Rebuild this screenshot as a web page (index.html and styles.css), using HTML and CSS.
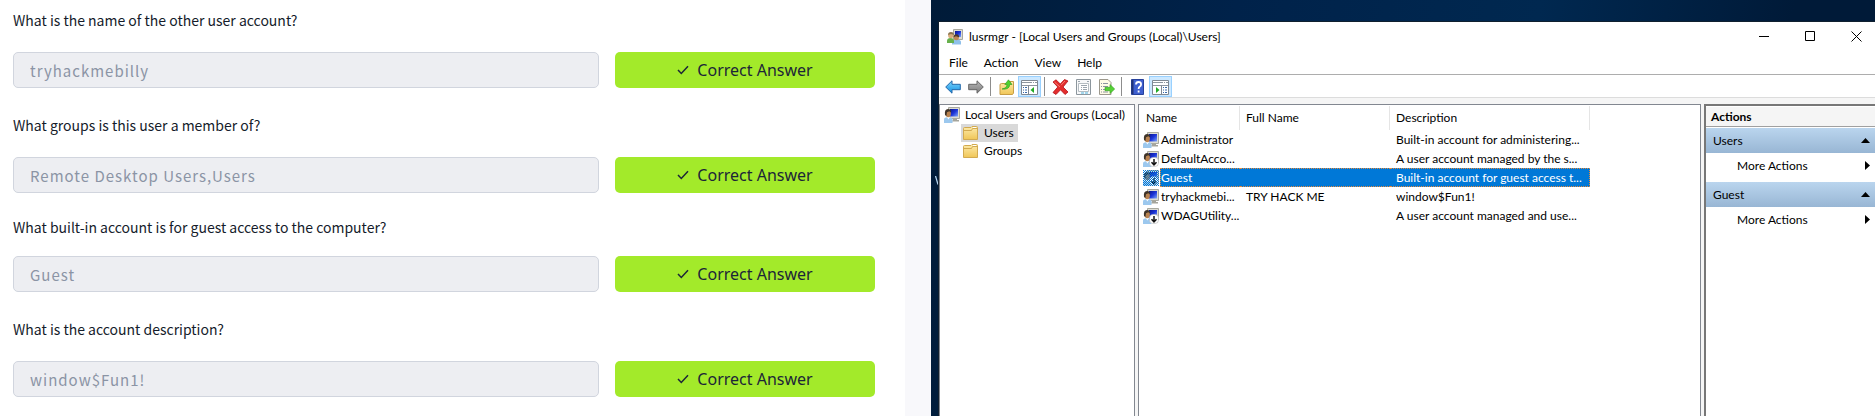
FILE: index.html
```
<!DOCTYPE html>
<html lang="en">
<head>
<meta charset="utf-8">
<title>Local users and groups</title>
<link rel="stylesheet" href="styles.css">
</head>
<body>
<svg class="sprite" aria-hidden="true">
  <defs>
    <linearGradient id="screen" x1="0" y1="0" x2="1" y2="1"><stop offset="0" stop-color="#0a1490"/><stop offset=".5" stop-color="#1c35d8"/><stop offset="1" stop-color="#7fa6f8"/></linearGradient>
    <linearGradient id="folderFill" x1="0" y1="0" x2="0" y2="1"><stop offset="0" stop-color="#fdebab"/><stop offset="1" stop-color="#f0c657"/></linearGradient>
    <linearGradient id="blueArrow" x1="0" y1="0" x2="0" y2="1"><stop offset="0" stop-color="#7fd4fb"/><stop offset="1" stop-color="#1292e4"/></linearGradient>
    <linearGradient id="grayArrow" x1="0" y1="0" x2="0" y2="1"><stop offset="0" stop-color="#b8b8b8"/><stop offset="1" stop-color="#7c7c7c"/></linearGradient>
    <symbol id="user" viewBox="0 0 16 16">
      <path d="M4.500.5H15.500V11.500H4.500z" fill="#dcdcd4" stroke="#a9a99f"/>
      <path d="M6 2h8v7.500H6z" fill="url(#screen)"/>
      <path d="M9 12h4v1h2v1.500H8z" fill="#a5a59c"/>
      <path d="M0 16V12.500q0-2 3-2.200h2q3.500 .2 3.500 2.200V16z" fill="#9cc8ee"/>
      <path d="M3 10l1.300 2.500L6 10z" fill="#fff"/>
      <ellipse cx="4.200" cy="6.500" rx="2.700" ry="3.800" fill="#b98350"/>
      <path d="M1 8Q.2 2 4 2q3.400 0 3.200 3.600L5.300 4.300 3 5.300 2.400 9z" fill="#3f3429"/>
    </symbol>
    <symbol id="user-off" viewBox="0 0 16 16">
      <use href="#user" width="16" height="16"/>
      <rect x="6.500" y="6.500" width="9" height="9" rx="3.500" fill="#fff" stroke="#b5b5b5" stroke-width=".6"/>
      <path d="M11 8v5.500M8.500 11.200l2.500 2.600 2.500-2.600" fill="none" stroke="#111" stroke-width="1.500"/>
    </symbol>
    <symbol id="group" viewBox="0 0 16 16">
      <path d="M6.500.5h9v10h-9z" fill="#dcdcd4" stroke="#a9a99f"/>
      <path d="M8 2h6v6H8z" fill="url(#screen)"/>
      <path d="M5 15.500V13q0-2.500 4.500-2.500T14 13v2.500z" fill="#8fc0ea"/>
      <path d="M0 14v-2q0-3 3.500-3T7 12v2z" fill="#67b04c"/>
      <circle cx="3.800" cy="6.500" r="2.700" fill="#d9ae7c"/>
      <path d="M1 6q0-3 3-3t3 3L4 5z" fill="#8b7450"/>
      <circle cx="9.300" cy="8.600" r="2.600" fill="#bf8755"/>
      <path d="M6.600 8.300q0-3 2.800-3t2.700 3L9 7.200z" fill="#4d3c2b"/>
    </symbol>
    <symbol id="folder" viewBox="0 0 15 14">
      <path d="M.5 13.500V2.500q0-1 1-1H8l1-1h4.500q1 0 1 1v12z" fill="url(#folderFill)" stroke="#d2aa50"/>
      <path d="M1 4.500h7.500l1-2H14" fill="none" stroke="#d2aa50"/>
      <path d="M10 1.500h3" stroke="#fff"/>
    </symbol>
  </defs>
</svg>

<main class="page">
  <section class="questions">
    <form class="question">
      <label for="q1">What is the name of the other user account?</label>
      <div class="answer"><input id="q1" type="text" value="tryhackmebilly" readonly><button type="button"><svg width="12" height="10" viewBox="0 0 12 10"><path d="M1 5l3.300 3.500L11 1.200"/></svg>Correct Answer</button></div>
    </form>
    <form class="question">
      <label for="q2">What groups is this user a member of?</label>
      <div class="answer"><input id="q2" type="text" value="Remote Desktop Users,Users" readonly><button type="button"><svg width="12" height="10" viewBox="0 0 12 10"><path d="M1 5l3.300 3.500L11 1.200"/></svg>Correct Answer</button></div>
    </form>
    <form class="question tight">
      <label for="q3">What built-in account is for guest access to the computer?</label>
      <div class="answer"><input id="q3" type="text" value="Guest" readonly><button type="button"><svg width="12" height="10" viewBox="0 0 12 10"><path d="M1 5l3.300 3.500L11 1.200"/></svg>Correct Answer</button></div>
    </form>
    <form class="question">
      <label for="q4">What is the account description?</label>
      <div class="answer"><input id="q4" type="text" value="window$Fun1!" readonly><button type="button"><svg width="12" height="10" viewBox="0 0 12 10"><path d="M1 5l3.300 3.500L11 1.200"/></svg>Correct Answer</button></div>
    </form>
  </section>

  <section class="desktop">
    <svg class="desktop-mark" width="3" height="9" viewBox="0 0 3 9" aria-hidden="true"><path d="M.5 0L3 8.500" stroke="#b9d8f2" stroke-width="1.300"/></svg>
    <div class="window">
      <header class="titlebar">
        <svg width="16" height="16"><use href="#group"/></svg>
        <h1>lusrmgr - [Local Users and Groups (Local)\Users]</h1>
        <div class="controls">
          <button type="button" aria-label="Minimize"><svg width="11" height="11"><path d="M0 5.500h10"/></svg></button>
          <button type="button" aria-label="Maximize"><svg width="11" height="11"><path d="M.5.5h9v9h-9z"/></svg></button>
          <button type="button" aria-label="Close"><svg width="11" height="11"><path d="M.5.5l10 10M10.500.5l-10 10"/></svg></button>
        </div>
      </header>
      <nav class="menu">
        <button type="button">File</button><button type="button">Action</button><button type="button">View</button><button type="button">Help</button>
      </nav>
      <div class="toolbar">
        <button type="button" aria-label="Back"><svg width="16" height="14" viewBox="0 0 16 14"><path d="M.7 7L7 .8v3.500h8.300v5.400H7v3.500z" fill="url(#blueArrow)" stroke="#2467a8"/></svg></button>
        <button type="button" aria-label="Forward"><svg width="16" height="14" viewBox="0 0 16 14"><path d="M15.300 7L9 .8v3.500H.7v5.400H9v3.500z" fill="url(#grayArrow)" stroke="#666"/></svg></button>
        <i class="sep"></i>
        <button type="button" aria-label="Up one level"><svg width="16" height="16" viewBox="0 0 16 16"><path d="M1 15.500V6q0-1.500 1.500-1.500H8l1-2h5.500V14l-1 1.500z" fill="url(#folderFill)" stroke="#c79d45"/><path d="M3 10Q8 9 8 5.500H5.800L9.500.8 13 5.500h-2.300Q10.500 11 3 10z" fill="#4ed12e" stroke="#2e9622" stroke-width=".6"/></svg></button>
        <button type="button" class="on" aria-label="Show console tree"><svg width="17" height="16" viewBox="0 0 17 16"><path d="M.5 1.500h16v14H.5z" fill="#fff" stroke="#7f8892"/><path d="M1 3.500h15M1 6.500h15" stroke="#8d969f"/><path d="M11 3.500h1m1 0h1" stroke="#fff"/><path d="M7.500 6.500v9" stroke="#7f8892"/><path d="M2 8.500h1m1 0h2M2 11h1m1 0h2M2 13.500h1m1 0h2" stroke="#3869a8"/><path d="M13 8v6L9.500 11z" fill="#21aa24"/></svg></button>
        <i class="sep"></i>
        <button type="button" aria-label="Delete"><svg width="17" height="16" viewBox="0 0 17 16"><path d="M1 3L4 .8 8.300 5 12.500.5 16 2 11 8l5 5-3 2.500-4.500-4.700L4 15.500 1 13.500 5.800 8z" fill="#e32d2d" stroke="#b31218" stroke-width=".8"/><path d="M2.500 3L8 8M13 2L9 6.200" stroke="#f67b70"/></svg></button>
        <button type="button" aria-label="Properties"><svg width="15" height="16" viewBox="0 0 15 16"><path d="M.5.5h14v15H.5z" fill="#f7f8f9" stroke="#8c969d"/><path d="M2.500 4.500h10v8h-10z" fill="#fff" stroke="#b5bdc2"/><path d="M2 2.500h2m7 0h2M5 6.500h6M5 8.500h1m1 0h4M5 10.500h1m1 0h4" stroke="#9ba5ae"/><path d="M5 14h3m1 0h3" stroke="#4fb3dd"/></svg></button>
        <button type="button" aria-label="Export list"><svg width="16" height="16" viewBox="0 0 16 16"><path d="M.5.500H9L12 3.500v12H.5z" fill="#fffbe6" stroke="#9c988c"/><path d="M2 4.500h1m1 0h5M2 7.500h1m1 0h5M2 10.500h1m1 0h3M2 13h1m1 0h5" stroke="#8d94a0"/><path d="M6 8.300h5V5.500l4.700 4.500-4.700 4.500v-2.800H6z" fill="#56d136" stroke="#32a11f" stroke-width=".6"/></svg></button>
        <i class="sep"></i>
        <button type="button" aria-label="Help"><svg width="13" height="16" viewBox="0 0 13 16"><path d="M.5.500h12v15H.5z" fill="#3e5fcf" stroke="#27419b"/><path d="M1.500 1v14" stroke="#203276" stroke-width="2"/><path d="M5 5.500Q5 3 7.500 3t2.600 2.300Q10.100 7 8.600 7.800 7.600 8.500 7.600 10M7.600 11.500v2" fill="none" stroke="#fff" stroke-width="1.800"/></svg></button>
        <button type="button" class="on" aria-label="Show action pane"><svg width="17" height="16" viewBox="0 0 17 16"><path d="M.5 1.500h16v14H.5z" fill="#fff" stroke="#7f8892"/><path d="M1 3.500h15M1 6.500h15" stroke="#8d969f"/><path d="M11 3.500h1m1 0h1" stroke="#fff"/><path d="M9.500 6.500v9" stroke="#7f8892"/><path d="M11 8.500h1m1 0h2M11 11h1m1 0h2M11 13.500h1m1 0h2" stroke="#3869a8"/><path d="M4 8v6L7.500 11z" fill="#21aa24"/></svg></button>
      </div>
      <div class="panes">
        <ul class="pane tree">
          <li class="root"><svg width="16" height="16"><use href="#user"/></svg><span>Local Users and Groups (Local)</span></li>
          <li class="current"><span class="node"><svg width="15" height="14"><use href="#folder"/></svg>Users</span></li>
          <li><span class="node"><svg width="15" height="14"><use href="#folder"/></svg>Groups</span></li>
        </ul>
        <div class="pane list">
          <table>
            <colgroup><col class="c-name"><col class="c-full"><col class="c-desc"></colgroup>
            <thead><tr><th>Name</th><th>Full Name</th><th>Description</th></tr></thead>
            <tbody>
              <tr><td><div class="name"><svg width="16" height="16"><use href="#user"/></svg><span>Administrator</span></div></td><td></td><td>Built-in account for administering...</td></tr>
              <tr><td><div class="name"><svg width="16" height="16"><use href="#user-off"/></svg><span>DefaultAcco...</span></div></td><td></td><td>A user account managed by the s...</td></tr>
              <tr class="selected"><td><div class="name"><svg width="16" height="16"><defs><pattern id="dither" width="2" height="2" patternUnits="userSpaceOnUse"><path d="M0 0h1v1H0zM1 1h1v1H1z" fill="#0078d7"/></pattern></defs><use href="#user-off"/><rect width="16" height="16" fill="url(#dither)"/></svg><span>Guest</span></div></td><td></td><td>Built-in account for guest access t...</td></tr>
              <tr><td><div class="name"><svg width="16" height="16"><use href="#user"/></svg><span>tryhackmebi...</span></div></td><td>TRY HACK ME</td><td>window$Fun1!</td></tr>
              <tr><td><div class="name"><svg width="16" height="16"><use href="#user-off"/></svg><span>WDAGUtility...</span></div></td><td></td><td>A user account managed and use...</td></tr>
            </tbody>
          </table>
        </div>
        <aside class="actions">
          <h2>Actions</h2>
          <button type="button" class="group">Users<svg width="9" height="5"><path d="M4.500 0L9 5H0z"/></svg></button>
          <button type="button" class="more">More Actions<svg width="5" height="9"><path d="M0 0l5 4.500L0 9z"/></svg></button>
          <button type="button" class="group">Guest<svg width="9" height="5"><path d="M4.500 0L9 5H0z"/></svg></button>
          <button type="button" class="more">More Actions<svg width="5" height="9"><path d="M0 0l5 4.500L0 9z"/></svg></button>
        </aside>
      </div>
    </div>
  </section>
</main>
</body>
</html>
```
FILE: styles.css
```
* { box-sizing: border-box; }
body { margin: 0; background: #f8f8fb; }
button { margin: 0; padding: 0; border: 0; background: none; font: inherit; color: inherit; }
svg { display: block; flex: none; }
.sprite { position: absolute; width: 0; height: 0; }

.page { display: grid; grid-template-columns: 905fr 944fr; column-gap: 26px; min-height: 100vh; }

/* Questions */
.questions { background: #fff; padding: 10px 30px 16px 13px; font-family: "Noto Sans CJK SC", "Noto Sans", sans-serif; }
.question { margin-bottom: 27px; }
.question:last-child { margin-bottom: 0; }
.question label { display: block; font-size: 14px; line-height: 20px; margin-bottom: 22px; color: #151c2b; }
.question:has(+ .tight) { margin-bottom: 24px; }
.question.tight label { margin-bottom: 19px; }
.answer { display: grid; grid-template-columns: 1fr 260px; gap: 16px; }
.answer input { width: 100%; min-width: 0; height: 36px; padding: 0 16px; border: 1px solid #d1d5de; border-radius: 5px; background: #edeef2; color: #8b94a5; font-family: inherit; font-size: 15px; letter-spacing: 1px; }
.answer button { display: flex; align-items: center; justify-content: center; gap: 8px; height: 36px; border-radius: 5px; background: #a3ea2a; color: #1c2538; font-family: "Noto Sans", sans-serif; font-size: 16px; }
.answer button path { fill: none; stroke: #1c2538; stroke-width: 1.5; }

/* Desktop and window frame */
.desktop { position: relative; display: flex; min-width: 0; padding: 21px 0 0 7px; background: linear-gradient(100deg, #001b38 0%, #00224a 30%, #002850 60%, #001a38 85%); }
.desktop-mark { position: absolute; left: 4px; top: 176px; }
.window { flex: 1; min-width: 0; display: flex; flex-direction: column; border: solid #10202f; border-width: 1px 0 0 1px; background: #fff; color: #000; font-family: Lato, "Open Sans", sans-serif; font-size: 12px; line-height: 18px; }
.titlebar { display: flex; align-items: center; height: 29px; padding-left: 8px; gap: 6px; }
.titlebar h1 { margin: 0; font-size: 12px; font-weight: 400; flex: 1; white-space: nowrap; }
.controls { display: flex; gap: 8px; }
.controls button { width: 38px; height: 28px; display: grid; place-items: center; }
.controls path { fill: none; stroke: #000; }
.menu { display: flex; align-items: flex-start; gap: 16px; height: 23px; padding: 3px 10px 0; }
.toolbar { display: flex; height: 24px; padding: 1px 2px 0; border: solid #adadad; border-width: 1px 0; border-bottom-color: #dcdcdc; }
.toolbar button { width: 23px; height: 21px; display: grid; place-items: center; border: 1px solid transparent; }
.toolbar .on { background: #cce8ff; border-color: #99d1ff; }
.sep { width: 8px; padding: 1px 4px 1px 3px; background: #8d8d8d content-box; }

.panes { flex: 1; display: grid; grid-template-columns: 196fr 563fr 171fr; gap: 3px; padding-top: 6px; background: #f5f5f5; }
.pane { min-width: 0; margin: 0; background: #fff; border: 1px solid #828790; border-bottom: 0; }

/* Console tree */
.tree { list-style: none; padding: 1px 0 0; }
.tree li { display: flex; height: 18px; white-space: nowrap; }
.tree .root { padding-left: 4px; gap: 5px; align-items: center; }
.node { display: flex; align-items: center; gap: 6px; margin-left: 21px; padding: 0 4px 0 2px; }
.current .node { background: #d9d9d9; }

/* Account list */
table { table-layout: fixed; width: 451px; border-collapse: separate; border-spacing: 0; }
.c-name { width: 101px; }
.c-full { width: 150px; }
.c-desc { width: 200px; }
th, td { padding: 0 0 0 6px; text-align: left; font-weight: 400; white-space: nowrap; }
th { height: 24px; border-right: 1px solid #e5e5e5; }
th:first-child { padding-left: 7px; }
thead { line-height: 24px; }
.list { padding-top: 1px; }
td { height: 19px; line-height: 17px; border: 0 solid transparent; border-width: 1px 0; }
td:first-child { padding: 0 0 0 4px; border-width: 0; }
.name { display: flex; align-items: center; height: 19px; gap: 1px; }
.name span { flex: 1; border: 1px solid transparent; }
.selected { color: #fff; }
.selected td + td, .selected span { background: #0078d7; border-color: #e58a3c; border-style: dotted; }
.selected span { border-right: 0; }
.selected td:last-child { border-right-width: 1px; }

/* Actions */
.actions { min-width: 0; background: #fff; border: solid #777; border-width: 2px 0 0 2px; }
.actions h2 { margin: 1px 0 1px; padding-left: 5px; height: 20px; line-height: 19px; font-size: 12px; font-weight: 700; background: #f5f5f5; border-bottom: 1px solid #a0a0a0; }
.actions button { display: flex; align-items: center; justify-content: space-between; width: 100%; height: 25px; padding: 0 5px 0 7px; }
.actions .group { background: linear-gradient(#bad5ee, #98b6d4); }
.actions .more { padding-left: 31px; margin-bottom: 4px; }
```
